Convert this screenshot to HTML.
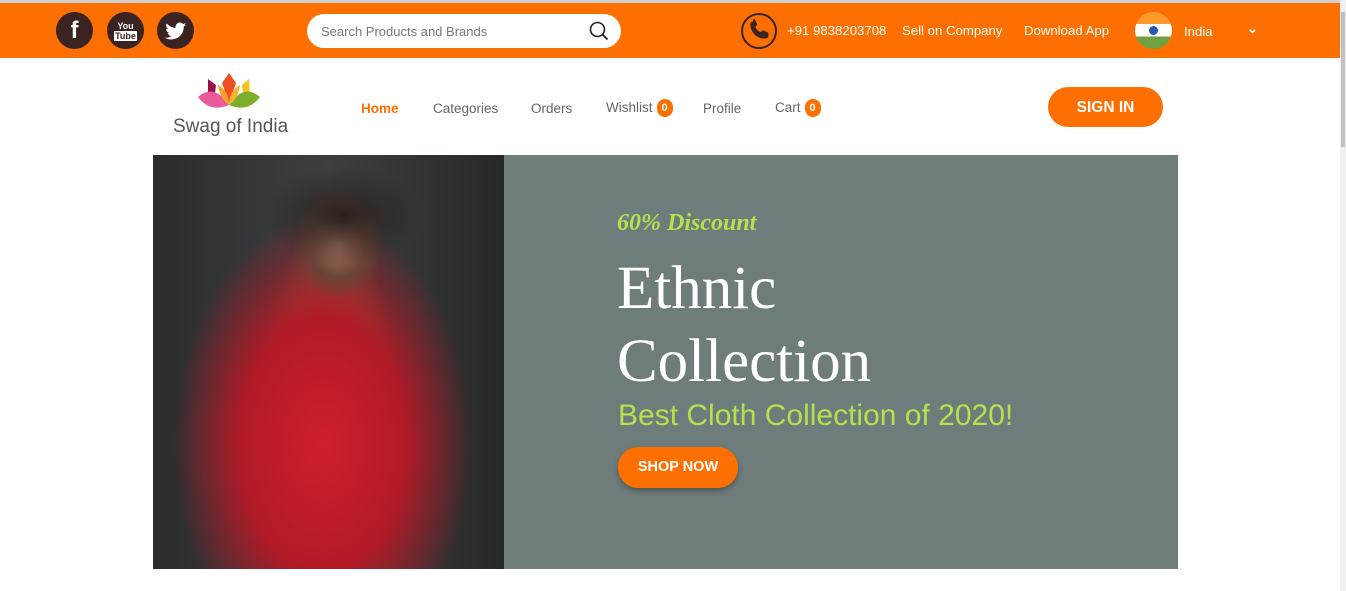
<!DOCTYPE html>
<html><head><meta charset="utf-8"><style>
*{margin:0;padding:0;box-sizing:border-box}
body{width:1346px;height:591px;overflow:hidden;background:#fff;font-family:"Liberation Sans",sans-serif;position:relative}
.top{position:absolute;left:0;top:0;width:1340px;height:3px;background:#d0d0d0}
.bar{position:absolute;left:0;top:3px;width:1340px;height:55px;background:#fd6f00}
.sb{position:absolute;right:0;top:0;width:6px;height:591px;background:#f0f0f0}
.sb i{position:absolute;left:1px;top:12px;width:4px;height:135px;background:#c1c1c1}
.c{position:absolute;width:37px;height:37px;border-radius:50%;background:#3a2320;color:#fff;text-align:center;font-weight:bold}
.search{position:absolute;left:307px;top:14px;width:314px;height:34px;border-radius:17px;background:#fff;font-size:13px;color:#777;padding:10px 14px}
.w{position:absolute;color:#fff;font-size:13.2px;top:23px}
.nav{position:absolute;top:101px;font-size:13.5px;color:#666}
.badge{display:inline-block;width:16px;height:18px;border-radius:8px;background:#fd6f00;color:#fff;font-size:11px;font-weight:bold;text-align:center;line-height:18px;margin-left:4px;vertical-align:1px}
.btn{position:absolute;background:#fd6f00;color:#fff;font-weight:bold;text-align:center;border-radius:20px}
</style></head><body>
<div class="top"></div><div class="bar"></div>
<div class="sb"><i></i></div>
<div class="c" style="left:56px;top:12px;font-size:24px;line-height:38px">f</div>
<div class="c" style="left:107px;top:12px;font-size:9px;line-height:10px;padding-top:9px">You<br><span style="background:#fff;color:#3a2320;padding:0 1px">Tube</span></div>
<div class="c" style="left:157px;top:12px">
<svg width="37" height="37" viewBox="0 0 24 24"><path fill="#fff" d="M19 8.2c-.5.2-1 .4-1.6.4.6-.3 1-.9 1.2-1.5-.5.3-1.1.5-1.7.7a2.8 2.8 0 0 0-4.8 2.5c-2.3-.1-4.4-1.200-5.8-2.9-.8 1.3-.3 2.9.9 3.7-.4 0-.9-.1-1.3-.3 0 1.4 1 2.5 2.2 2.8-.4.1-.9.1-1.3 0 .4 1.1 1.4 1.9 2.6 1.9A5.6 5.6 0 0 1 5 16.6 8 8 0 0 0 17.3 9.5c.6-.4 1.1-.8 1.7-1.3z"/></svg></div>
<div class="search">Search Products and Brands
<svg style="position:absolute;right:12px;top:7px" width="20" height="20" viewBox="0 0 20 20"><circle cx="8.5" cy="8.5" r="7" fill="none" stroke="#222" stroke-width="1.6"/><path d="M13.5 13.5l5 5" stroke="#222" stroke-width="1.8"/></svg></div>
<div style="position:absolute;left:741px;top:13px;width:36px;height:36px;border-radius:50%;border:2px solid #3a2320"><svg width="32" height="32" viewBox="0 0 24 24"><path fill="#3a2320" d="M7 4c.7 0 1 .4 1.3 1l1.2 2.6c.2.5 0 1-.3 1.3l-1 1c.8 1.8 2.2 3.2 4 4l1-1c.3-.3.8-.5 1.3-.3l2.6 1.2c.6.3 1 .6 1 1.3v1.6c0 1-.8 1.8-1.8 1.8C10 19.5 4.5 14 4.5 7.8 4.5 6.8 5.3 6 6.3 6z" transform="translate(1 -1)"/></svg></div>
<div class="w" style="left:787px">+91 9838203708</div>
<div class="w" style="left:902px">Sell on Company</div>
<div class="w" style="left:1024px">Download App</div>
<div style="position:absolute;left:1135px;top:12px;width:37px;height:37px;border-radius:50%;overflow:hidden;background:linear-gradient(#fd9a2a 0 33%,#fff 33% 66%,#6fa043 66%)"><div style="position:absolute;left:14px;top:14px;width:9px;height:9px;border-radius:50%;background:#2757b0"></div></div>
<div class="w" style="left:1184px;top:24px">India</div>
<div class="w" style="left:1247px;top:21px;font-size:13px;font-weight:bold">⌄</div>
<svg style="position:absolute;left:196px;top:73px" width="66" height="40" viewBox="0 0 66 40">
<path d="M12 6 L20 12 L18 28 L12 22Z" fill="#9a1048"/>
<path d="M33 0 L40 10 L33 30 L26 10Z" fill="#f04e23"/>
<path d="M53 6 L46 12 L48 28 L54 22Z" fill="#f8c21b"/>
<path d="M2 24 Q18 10 33 32 Q14 40 2 24Z" fill="#ea5a9a"/>
<path d="M64 24 Q48 10 33 32 Q52 40 64 24Z" fill="#7cad2f"/>
<path d="M22 12 Q33 18 33 32 Q24 26 22 12Z" fill="#f7a12a"/>
<path d="M44 12 Q33 18 33 32 Q42 26 44 12Z" fill="#f7b42a"/>
</svg>
<div style="position:absolute;left:173px;top:116px;font-size:19px;color:#555">Swag of India</div>
<div class="nav" style="left:361px;color:#fd6f00;font-weight:bold">Home</div>
<div class="nav" style="left:433px">Categories</div>
<div class="nav" style="left:531px">Orders</div>
<div class="nav" style="left:606px;top:99px">Wishlist<span class="badge">0</span></div>
<div class="nav" style="left:703px">Profile</div>
<div class="nav" style="left:775px;top:99px">Cart<span class="badge">0</span></div>
<div class="btn" style="left:1048px;top:87px;width:115px;height:40px;line-height:42px;font-size:15.5px">SIGN IN</div>
<div style="position:absolute;left:153px;top:155px;width:351px;height:414px;background:
radial-gradient(ellipse 80px 50px at 190px 60px,#2a2220 0,transparent 100%),
radial-gradient(ellipse 45px 55px at 185px 90px,#a87560 0,#6a4436 60%,transparent 100%),
radial-gradient(ellipse 150px 230px at 170px 290px,#d01f2c 0,#b01a26 55%,transparent 100%),
radial-gradient(ellipse 70px 150px at 175px 230px,#c8983c 0,transparent 100%),
linear-gradient(90deg,#2a2c2e,#3c3f41 50%,#262829)"></div>
<div style="position:absolute;left:504px;top:155px;width:674px;height:414px;background:#6e7d7b"></div>
<div style="position:absolute;left:617px;top:210px;font-family:'Liberation Serif',serif;font-style:italic;font-weight:bold;font-size:24px;color:#b6e04d">60% Discount</div>
<div style="position:absolute;left:617px;top:252px;font-family:'Liberation Serif',serif;font-size:61px;line-height:73px;color:#fff">Ethnic<br>Collection</div>
<div style="position:absolute;left:618px;top:399px;font-size:30px;color:#b6e04d">Best Cloth Collection of 2020!</div>
<div class="btn" style="left:618px;top:447px;width:120px;height:41px;line-height:41px;font-size:14.5px;box-shadow:0 3px 6px rgba(0,0,0,.3)">SHOP NOW</div>
</body></html>
